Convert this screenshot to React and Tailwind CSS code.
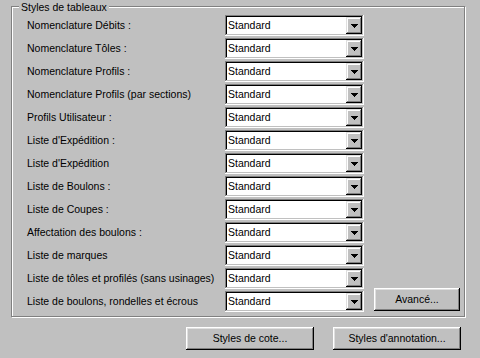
import React from "react";

const rows = [
  "Nomenclature Débits :",
  "Nomenclature Tôles :",
  "Nomenclature Profils :",
  "Nomenclature Profils (par sections)",
  "Profils Utilisateur :",
  "Liste d'Expédition :",
  "Liste d'Expédition",
  "Liste de Boulons :",
  "Liste de Coupes :",
  "Affectation des boulons :",
  "Liste de marques",
  "Liste de tôles et profilés (sans usinages)",
  "Liste de boulons, rondelles et écrous",
];

function Combo() {
  return (
    <div className="w-[139px] h-[21px] bg-white p-[2px] flex shadow-[inset_-1px_-1px_#ffffff,inset_1px_1px_#808080,inset_-2px_-2px_#c0c0c0,inset_2px_2px_#000000]">
      <div className="flex-1 pl-[1px] leading-[17px]">Standard</div>
      <div className="w-[16px] h-[17px] bg-[#c0c0c0] flex items-center justify-center shadow-[inset_-1px_-1px_#000000,inset_1px_1px_#dfdfdf,inset_-2px_-2px_#808080,inset_2px_2px_#ffffff]">
        <svg width="7" height="4" viewBox="0 0 7 4" className="block">
          <path d="M0 0h7v1H0zM1 1h5v1H1zM2 2h3v1H2zM3 3h1v1H3z" fill="#000" />
        </svg>
      </div>
    </div>
  );
}

function Button({ children, className }) {
  return (
    <div
      className={
        "h-[23px] bg-[#c0c0c0] flex items-center justify-center shadow-[inset_-1px_-1px_#000000,inset_1px_1px_#ffffff,inset_-2px_-2px_#808080,inset_2px_2px_#dfdfdf] " +
        (className || "")
      }
    >
      {children}
    </div>
  );
}

export default function App() {
  return (
    <div
      className="w-[480px] h-[358px] bg-[#c0c0c0] text-black text-[10.5px] leading-[13px] overflow-hidden"
      style={{ fontFamily: '"Liberation Sans", Arial, sans-serif' }}
    >
      <div className="pt-[6px] pl-[11px]">
        <div className="relative w-[454px] h-[311px] border border-[#808080] shadow-[inset_1px_1px_#ffffff,1px_1px_#ffffff] pt-[8px] pl-[15px]">
          <div className="absolute left-[7px] top-[-6px] px-[2px] bg-[#c0c0c0]">Styles de tableaux</div>
          <div className="flex flex-col gap-[2px]">
            {rows.map((r, i) => (
              <div key={i} className="flex items-center h-[21px]">
                <div className="w-[198px] whitespace-nowrap">{r}</div>
                <Combo />
                {i === rows.length - 1 && (
                  <Button className="w-[86px] ml-[10px] -mt-[5px]">Avancé...</Button>
                )}
              </div>
            ))}
          </div>
        </div>
      </div>
      <div className="flex gap-[19px] pl-[186px] mt-[10px]">
        <Button className="w-[128px]">Styles de cote...</Button>
        <Button className="w-[128px]">Styles d'annotation...</Button>
      </div>
    </div>
  );
}
